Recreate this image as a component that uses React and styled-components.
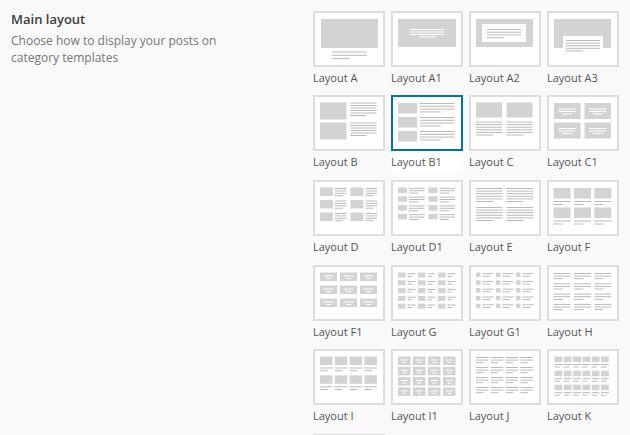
import React from 'react'
import styled, { createGlobalStyle } from 'styled-components'

const GlobalStyle = createGlobalStyle`
  html, body {
    margin: 0;
    padding: 0;
    overflow: hidden;
    background: #f9f9f9;
    font-family: "Open Sans", "Liberation Sans", sans-serif;
  }
`

const BLOCK = '#d3d3d3'
const LINE = '#b9b9b9'
const WHITE = '#ffffff'

// helpers that return shape lists in box coordinates (72 x 56, border included)
const block = (x, y, w, h, fill = BLOCK) => [{ x, y, w, h, fill }]

const lines = (x, y, w, n, pitch = 2.5, short = 0.5, fill = LINE) => {
  const out = []
  for (let i = 0; i < n; i++) {
    const last = i === n - 1
    out.push({ x, y: y + i * pitch, w: last ? w * short : w, h: 1, fill })
  }
  return out
}

const centered = (x, y, w, widths, pitch = 2.5, fill = WHITE) =>
  widths.map((lw, i) => ({ x: x + (w - lw) / 2, y: y + i * pitch, w: lw, h: 1, fill }))

const grid = (cols, rows, fn) => {
  const out = []
  rows.forEach((y, r) => cols.forEach((x, c) => out.push(...fn(x, y, c, r))))
  return out
}

const layouts = [
  {
    name: 'Layout A',
    shapes: [...block(8, 8, 57, 29), ...lines(19, 40.5, 35, 3, 3.3, 0.5)],
  },
  {
    name: 'Layout A1',
    shapes: [...block(7, 8, 58, 28), ...centered(7, 18, 58, [34, 34, 34, 17])],
  },
  {
    name: 'Layout A2',
    shapes: [
      ...block(7, 8, 57, 28),
      ...block(13, 13, 44, 18, WHITE),
      ...lines(18, 18, 34, 4, 2.7, 0.5),
    ],
  },
  {
    name: 'Layout A3',
    shapes: [
      ...block(7, 8, 57, 29),
      ...block(16, 25, 40, 19.5, WHITE),
      ...lines(19, 29, 34, 5, 2.6, 0.5),
    ],
  },
  {
    name: 'Layout B',
    shapes: [
      ...block(7, 7.5, 26.5, 17),
      ...block(7, 27.5, 26.5, 17),
      ...lines(37.5, 7.5, 26, 6, 2.5, 0.6),
      ...lines(37.5, 27.5, 26, 6, 2.5, 0.6),
    ],
  },
  {
    name: 'Layout B1',
    active: true,
    shapes: grid([7], [8, 22, 36], (x, y) => [
      ...block(x, y, 19, 10.5),
      ...lines(29, y, 34.5, 4, 2.8, 0.6),
    ]),
  },
  {
    name: 'Layout C',
    shapes: grid([7, 37.5], [7.5], (x, y) => [
      ...block(x, y, 26, 15),
      ...lines(x, y + 19, 26, 6, 2.6, 0.65),
    ]),
  },
  {
    name: 'Layout C1',
    shapes: grid([7, 37.5], [8, 27.5], (x, y) => [
      ...block(x, y, 26.5, 16),
      ...centered(x, y + 5.5, 26.5, [17, 17, 10], 2.5),
    ]),
  },
  {
    name: 'Layout D',
    shapes: grid([7, 37.5], [7.5, 20, 32.5], (x, y) => [
      ...block(x, y, 13, 8.5),
      ...lines(x + 15, y + 0.5, 11.5, 4, 2.4, 0.7),
    ]),
  },
  {
    name: 'Layout D1',
    shapes: grid([7, 37.5], [7.5, 16.3, 25.1, 33.9], (x, y) => [
      ...block(x, y, 9, 5.5),
      ...lines(x + 11, y + 0.3, 15.5, 3, 2.4, 0.6),
    ]),
  },
  {
    name: 'Layout E',
    shapes: grid([7, 37.5], [8, 27], (x, y) => [...lines(x, y, 26.5, 6, 2.6, 0.65)]),
  },
  {
    name: 'Layout F',
    shapes: grid([6.5, 27, 47.3], [8, 27.5], (x, y) => [
      ...block(x, y, 17, 10.5),
      ...lines(x, y + 13, 17, 2, 3, 0.55),
    ]),
  },
  {
    name: 'Layout F1',
    shapes: grid([7, 27, 47], [7.5, 20.5, 33.5], (x, y) => [
      ...block(x, y, 17, 8.5),
      ...centered(x, y + 3, 17, [10, 5], 2.5),
    ]),
  },
  {
    name: 'Layout G',
    shapes: grid([7, 27, 47], [7.5, 15.3, 23.1, 30.9, 38.7], (x, y) => [
      ...block(x, y, 7.5, 5),
      ...lines(x + 9.5, y + 0.8, 8, 2, 2.6, 0.6),
    ]),
  },
  {
    name: 'Layout G1',
    shapes: grid([7, 27, 47], [7.5, 15.3, 23.1, 30.9, 38.7], (x, y) => [
      ...block(x, y, 4.5, 4.5),
      ...lines(x + 6.5, y + 0.6, 11, 2, 2.6, 0.7),
    ]),
  },
  {
    name: 'Layout H',
    shapes: grid([6.5, 27, 47.3], [8, 18.3, 28.6, 38.9], (x, y) => [
      ...lines(x, y, 17, 3, 2.6, 0.55),
    ]),
  },
  {
    name: 'Layout I',
    shapes: grid([7, 21.8, 36.6, 51.4], [7.5, 26.3], (x, y) => [
      ...block(x, y, 12.5, 8.5),
      ...lines(x, y + 11, 12.5, 2, 2.7, 0.6),
    ]),
  },
  {
    name: 'Layout I1',
    shapes: grid([7, 22, 37, 52], [7.5, 17.8, 28.1, 38.4], (x, y) => [
      ...block(x, y, 12.5, 8.5),
      ...centered(x, y + 3, 12.5, [7, 3.5], 2.5),
    ]),
  },
  {
    name: 'Layout J',
    shapes: grid([7, 21.8, 36.6, 51.4], [8, 18, 28, 38], (x, y) => [
      ...lines(x, y, 12.5, 3, 2.6, 0.6),
    ]),
  },
  {
    name: 'Layout K',
    shapes: grid([7.5, 16.8, 26.1, 35.4, 44.7, 54], [7.5, 21.7, 35.7], (x, y) => [
      ...block(x, y, 7.8, 5.5),
      ...lines(x, y + 7.5, 7.8, 2, 2.5, 0.7),
    ]),
  },
  {
    // next row, only its top edge shows at the bottom of the page
    name: '',
    shapes: [...block(7, 7.5, 57, 18)],
  },
]

function Preview({ shapes }) {
  return (
    <svg width="68" height="52" viewBox="2 2 68 52" style={{ display: 'block' }}>
      {shapes.map((s, i) => (
        <rect key={i} x={s.x} y={s.y} width={s.w} height={s.h} fill={s.fill} />
      ))}
    </svg>
  )
}

export default function App() {
  return (
    <Page>
      <GlobalStyle />
      <Sidebar>
        <Title>Main layout</Title>
        <Description>Choose how to display your posts on category templates</Description>
      </Sidebar>
      <Choices>
        {layouts.map((l, i) => (
          <Choice key={i} $active={l.active}>
            <Thumb $active={l.active}>
              <Preview shapes={l.shapes} />
            </Thumb>
            {l.name && <Label>{l.name}</Label>}
          </Choice>
        ))}
      </Choices>
    </Page>
  )
}

const Page = styled.div`
  display: flex;
  align-items: flex-start;
  height: 435px;
  overflow: hidden;
`

const Sidebar = styled.div`
  width: 313px;
  box-sizing: border-box;
  padding: 10px 11px 0;
`

const Title = styled.h3`
  margin: 0;
  font-size: 13px;
  line-height: 18px;
  font-weight: 600;
  color: #3c3c3c;
`

const Description = styled.p`
  margin: 4px 0 0;
  width: 230px;
  font-size: 12px;
  line-height: 17px;
  color: #767676;
`

const Choices = styled.div`
  display: grid;
  grid-template-columns: repeat(4, 72px);
  column-gap: 6px;
  row-gap: 6.66px;
  padding-top: 10.7px;
`

const Choice = styled.div`
  display: flex;
  flex-direction: column;
  background: ${(p) => (p.$active ? '#ffffff' : 'transparent')};
`

const Thumb = styled.div`
  width: 72px;
  height: 56px;
  box-sizing: border-box;
  border: 2px solid ${(p) => (p.$active ? '#0073aa' : '#dddddd')};
  background: #fff;
`

const Label = styled.div`
  height: 22px;
  line-height: 22px;
  font-size: 11px;
  color: #555;
  white-space: nowrap;
`
